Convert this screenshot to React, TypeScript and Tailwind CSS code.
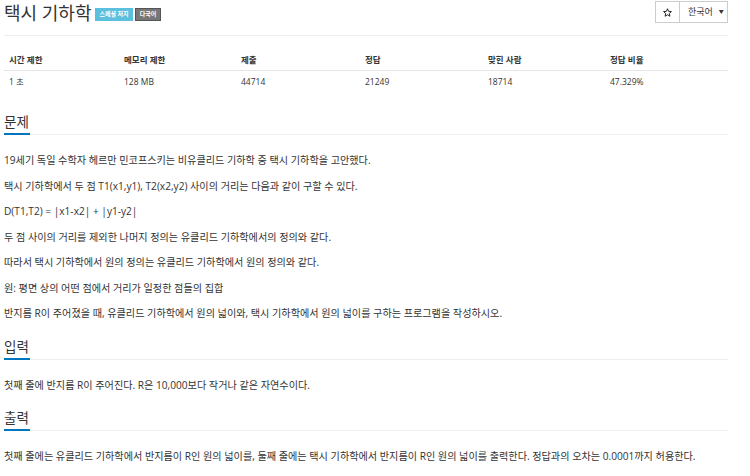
import React from "react";

const font = { fontFamily: '"Open Sans", "Noto Sans CJK KR", sans-serif' };

function Heading({ children, top }: { children: React.ReactNode; top: string }) {
  return (
    <div className={`${top} border-b border-[#eeeeee] flex`}>
      <span className="inline-block border-b-2 border-[#0076c0] -mb-px text-[13.5px] leading-[22px] text-[#333] pr-[1px]">
        {children}
      </span>
    </div>
  );
}

const cols = ["시간 제한", "메모리 제한", "제출", "정답", "맞힌 사람", "정답 비율"];
const vals = ["1 초", "128 MB", "44714", "21249", "18714", "47.329%"];

export default function App() {
  return (
    <div className="w-[750px] h-[476px] bg-white overflow-hidden" style={font}>
      <div className="ml-[4px] w-[724px]">
        <div className="h-[36px] border-b border-[#eeeeee] flex items-start justify-between">
          <div className="flex items-center h-[27px]">
            <span className="text-[18px] leading-[27px] text-[#333]">택시 기하학</span>
            <span className="ml-[4px] mt-[2px] h-[13px] px-[4px] bg-[#5bc0de] text-white text-[6px] font-bold leading-[13px]">
              스페셜 저지
            </span>
            <span className="ml-[2px] mt-[2px] h-[13px] px-[4px] bg-[#777777] border border-[#555] text-white text-[6px] font-bold leading-[11px]">
              다국어
            </span>
          </div>
          <div className="mt-[1px] flex h-[22px] border border-[#cccccc] text-[#333]">
            <div className="w-[24px] flex items-center justify-center border-r border-[#cccccc]">
              <svg width="9" height="9" viewBox="0 0 24 24" fill="none" stroke="#222" strokeWidth="2.6" strokeLinejoin="round">
                <polygon points="12,2 14.9,8.9 22.5,9.6 16.8,14.6 18.5,22 12,18.1 5.5,22 7.2,14.6 1.5,9.6 9.1,8.9" />
              </svg>
            </div>
            <div className="w-[47px] flex items-center pl-[8px] text-[9px]">
              한국어
              <span className="ml-[6px] text-[5px]">▼</span>
            </div>
          </div>
        </div>

        <div className="mt-[14px] grid grid-cols-[115px_117px_124px_123px_122px_123px] text-[8.5px] text-[#333]">
          {cols.map((c) => (
            <div key={c} className="h-[21px] pl-[5px] flex items-center font-bold border-b border-[#e5e5e5]">
              {c}
            </div>
          ))}
          {vals.map((v) => (
            <div key={v} className="h-[23px] pl-[5px] flex items-center">
              {v}
            </div>
          ))}
        </div>

        <Heading top="mt-[17px]">문제</Heading>
        <div className="mt-[13px] text-[10.15px] leading-[25.5px] text-[#333]">
          <p>19세기 독일 수학자 헤르만 민코프스키는 비유클리드 기하학 중 택시 기하학을 고안했다.</p>
          <p>택시 기하학에서 두 점 T1(x1,y1), T2(x2,y2) 사이의 거리는 다음과 같이 구할 수 있다.</p>
          <p>D(T1,T2) = |x1-x2| + |y1-y2|</p>
          <p>두 점 사이의 거리를 제외한 나머지 정의는 유클리드 기하학에서의 정의와 같다.</p>
          <p>따라서 택시 기하학에서 원의 정의는 유클리드 기하학에서 원의 정의와 같다.</p>
          <p>원: 평면 상의 어떤 점에서 거리가 일정한 점들의 집합</p>
          <p>반지름 R이 주어졌을 때, 유클리드 기하학에서 원의 넓이와, 택시 기하학에서 원의 넓이를 구하는 프로그램을 작성하시오.</p>
        </div>

        <Heading top="mt-[9px]">입력</Heading>
        <div className="mt-[13px] text-[10.15px] leading-[25.5px] text-[#333]">
          <p>첫째 줄에 반지름 R이 주어진다. R은 10,000보다 작거나 같은 자연수이다.</p>
        </div>

        <Heading top="mt-[9px]">출력</Heading>
        <div className="mt-[13px] text-[10.15px] leading-[25.5px] text-[#333]">
          <p>첫째 줄에는 유클리드 기하학에서 반지름이 R인 원의 넓이를, 둘째 줄에는 택시 기하학에서 반지름이 R인 원의 넓이를 출력한다. 정답과의 오차는 0.0001까지 허용한다.</p>
        </div>
      </div>
    </div>
  );
}
